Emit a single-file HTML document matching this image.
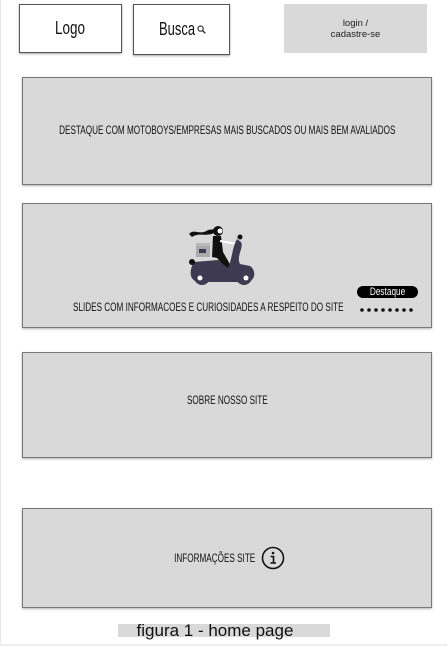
<!DOCTYPE html>
<html><head><meta charset="utf-8"><style>
*{margin:0;padding:0;box-sizing:border-box}
body{width:448px;height:647px;background:#fff;position:relative;overflow:hidden;font-family:"Liberation Sans",sans-serif}
.frame{position:absolute;left:0;top:0;width:447px;height:646px;border-left:1px solid #e8e8e8;border-bottom:2px solid #eee}
.b{position:absolute;display:flex;align-items:center;justify-content:center;color:#111}
.w{background:#fff;border:1px solid #555;box-shadow:0 1px 2px rgba(0,0,0,.35)}
.g{background:#d9d9d9;border:1px solid #777;box-shadow:0 1px 2px rgba(0,0,0,.3)}
.c{display:inline-block;white-space:nowrap;transform:scaleX(.68)}
</style></head><body>
<div class="frame"></div>
<div class="b w" style="left:19px;top:4px;width:103px;height:49px;font-size:18px"><span class="c" style="transform:scaleX(.75)">Logo</span></div>
<div class="b w" style="left:133px;top:4px;width:97px;height:51px;font-size:18px"><span class="c" style="transform:scaleX(.72);margin:0 -7px 0 -5px">Busca</span><svg width="9" height="9" viewBox="0 0 9 9" style="margin-left:2px"><circle cx="3.6" cy="3.6" r="2.6" fill="none" stroke="#333" stroke-width="1.2"/><path d="M5.5 5.5L8.3 8.3" stroke="#333" stroke-width="1.4"/></svg></div>
<div class="b" style="left:284px;top:4px;width:143px;height:49px;background:#d9d9d9;font-size:9.5px;text-align:center;line-height:11px;color:#222">login /<br>cadastre-se</div>
<div class="b g" style="left:22px;top:77px;width:410px;height:108px;font-size:12px;padding-bottom:2px"><span class="c">DESTAQUE COM MOTOBOYS/EMPRESAS MAIS BUSCADOS OU MAIS BEM AVALIADOS</span></div>
<div class="b g" style="left:22px;top:203px;width:410px;height:125px;font-size:12px;display:block">
<svg style="position:absolute;left:165px;top:20px" width="72" height="64" viewBox="0 0 72 64">
<path d="M1 10 C6 4 12 12 20 6 L27 5 L26 9 C18 13 11 8 4 13Z" fill="#111"/>
<circle cx="30" cy="7" r="5" fill="#111"/>
<circle cx="32" cy="7" r="2.5" fill="#fff"/>
<rect x="8" y="19" width="14" height="14" fill="#aaa"/>
<rect x="8" y="19" width="14" height="3" fill="#bbb"/>
<rect x="11" y="25" width="7" height="4" fill="#3d3a52"/>
<path d="M25 12 L33 12 L35 28 L43 42 L39 46 L29 34 L24 33Z" fill="#111"/>
<path d="M32 17 L49 20" stroke="#fff" stroke-width="2"/>
<circle cx="52" cy="13" r="2.5" fill="#111"/>
<path d="M49 15 L53 18 C56 24 48 32 52 40 L62 42 C68 46 68 56 60 58 L12 58 C2 58 0 48 6 38 L30 36 L40 44 C44 36 44 24 49 15Z" fill="#3d3a52"/>
<circle cx="14" cy="53" r="8" fill="#3d3a52"/><circle cx="56" cy="53" r="8" fill="#3d3a52"/>
<circle cx="12" cy="54" r="2.5" fill="#fff"/><circle cx="58" cy="54" r="2.5" fill="#fff"/>
<circle cx="4" cy="38" r="3" fill="#111"/>
</svg>
<div style="position:absolute;left:50px;top:96px;transform-origin:0 0" class="c">SLIDES COM INFORMACOES E CURIOSIDADES A RESPEITO DO SITE</div>
<div style="position:absolute;left:334px;top:82px;width:61px;height:12px;background:#000;border-radius:6px;color:#fff;font-size:11px;text-align:center;line-height:12px"><span class="c" style="transform:scaleX(.75)">Destaque</span></div>
<svg style="position:absolute;left:337px;top:104px" width="56" height="4" viewBox="0 0 56 4"><g fill="#111"><circle cx="2" cy="2" r="1.8"/><circle cx="9" cy="2" r="1.8"/><circle cx="16" cy="2" r="1.8"/><circle cx="23" cy="2" r="1.8"/><circle cx="30" cy="2" r="1.8"/><circle cx="37" cy="2" r="1.8"/><circle cx="44" cy="2" r="1.8"/><circle cx="51" cy="2" r="1.8"/></g></svg>
</div>
<div class="b g" style="left:22px;top:352px;width:410px;height:106px;font-size:12px;padding-bottom:10px"><span class="c">SOBRE NOSSO SITE</span></div>
<div class="b g" style="left:22px;top:508px;width:410px;height:100px;font-size:12px"><span class="c" style="margin:0 -18px 0 -14px">INFORMAÇÕES SITE</span><svg width="24" height="24" viewBox="0 0 24 24" style="margin-left:4px"><circle cx="12" cy="12" r="10.5" fill="none" stroke="#111" stroke-width="1.6"/><circle cx="12" cy="7" r="1.3" fill="#111"/><path d="M9.5 10.5H12.5V17M9.5 17H15" fill="none" stroke="#111" stroke-width="1.6"/></svg></div>
<div style="position:absolute;left:118px;top:624px;width:212px;height:13px;background:#d9d9d9"></div>
<div style="position:absolute;left:118px;top:621px;width:194px;text-align:center;font-size:17px;color:#111">figura 1 - home page</div>
</body></html>
